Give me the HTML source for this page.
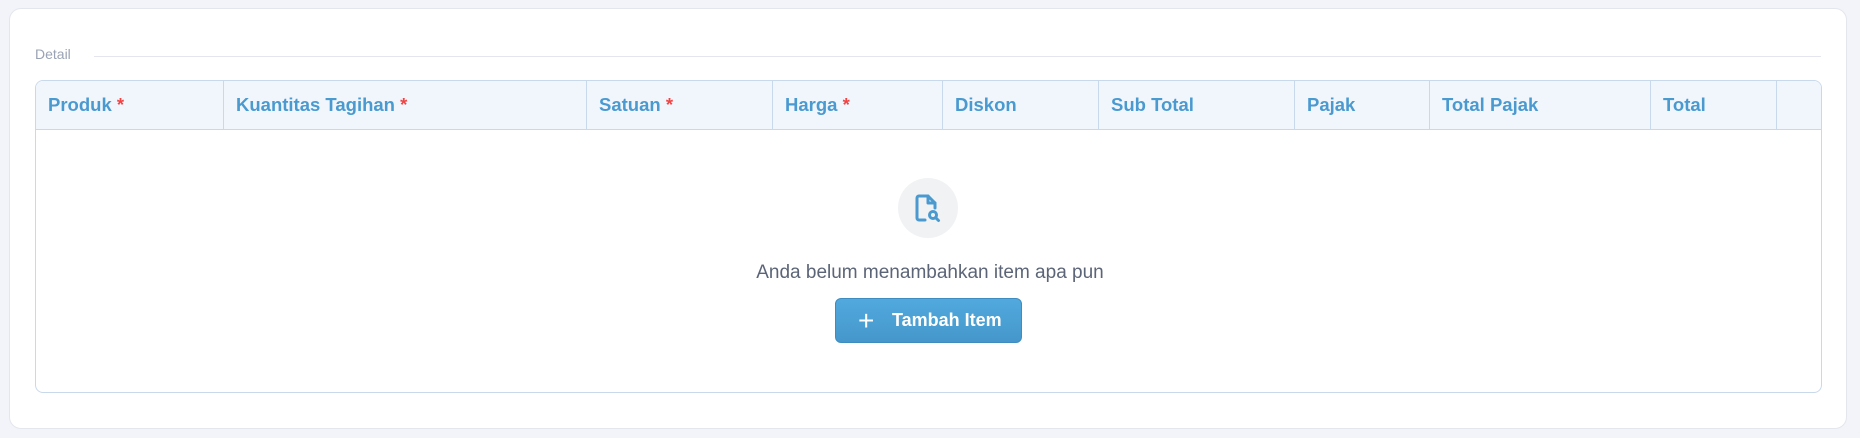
<!DOCTYPE html>
<html><head><style>
body{margin:0;width:1860px;height:438px;background:#f3f4f9;font-family:"Liberation Sans",sans-serif;position:relative;overflow:hidden}
.card{position:absolute;left:9px;top:8px;width:1836px;height:419px;background:#fff;border:1px solid #e4e6ee;border-radius:12px}
.det{position:absolute;left:35px;top:46px;font-size:14px;color:#9aa3b5}
.line{position:absolute;left:94px;top:56px;width:1727px;height:1px;background:#e3e6ee}
.tbl{position:absolute;left:35px;top:80px;width:1785px;height:311px;border:1px solid #c8d9ec;border-radius:8px;overflow:hidden}
.hd{position:absolute;left:0;top:0;width:100%;height:48px;background:#f1f6fd;border-bottom:1px solid #c8d9ec}
.c{position:absolute;top:0;height:48px;line-height:48px;font-size:18.5px;font-weight:bold;color:#4a9ad0;padding-left:12px;box-sizing:border-box;border-right:1px solid #c8d9ec}
.r{color:#f04444}
.circ{position:absolute;left:898px;top:178px;width:60px;height:60px;border-radius:50%;background:#f1f2f4}
.msg{position:absolute;left:0;width:1860px;top:262px;text-align:center;font-size:19px;color:#5c6577}
.btn{position:absolute;left:835px;top:298px;width:187px;height:45px;border-radius:6px;background:linear-gradient(#51a9dd,#4597cb);border:1px solid #3f8cc0;box-sizing:border-box;color:#fff;font-weight:bold;font-size:18px;line-height:43px}
</style></head><body>
<div class="card"></div>
<div class="det">Detail</div><div class="line"></div>
<div class="tbl"><div class="hd">
<div class="c" style="left:0;width:188px">Produk <span class="r">*</span></div>
<div class="c" style="left:188px;width:363px">Kuantitas Tagihan <span class="r">*</span></div>
<div class="c" style="left:551px;width:186px">Satuan <span class="r">*</span></div>
<div class="c" style="left:737px;width:170px">Harga <span class="r">*</span></div>
<div class="c" style="left:907px;width:156px">Diskon</div>
<div class="c" style="left:1063px;width:196px">Sub Total</div>
<div class="c" style="left:1259px;width:135px">Pajak</div>
<div class="c" style="left:1394px;width:221px">Total Pajak</div>
<div class="c" style="left:1615px;width:126px">Total</div>
</div></div>
<div class="circ"><svg width="60" height="60" viewBox="0 0 60 60" fill="none" stroke="#4a9ad0" stroke-width="3" stroke-linecap="round" stroke-linejoin="round"><path d="M27 42h-6a2 2 0 0 1-2-2V20a2 2 0 0 1 2-2h9l7 7v5"/><path d="M30 18v7h7"/><circle cx="35" cy="37" r="3.5"/><path d="M37.5 39.5l3 3"/></svg></div>
<div class="msg">Anda belum menambahkan item apa pun</div>
<div class="btn"><span style="position:absolute;left:22px;top:0;font-size:28px;font-weight:normal">+</span><span style="position:absolute;left:56px">Tambah Item</span></div>
</body></html>
